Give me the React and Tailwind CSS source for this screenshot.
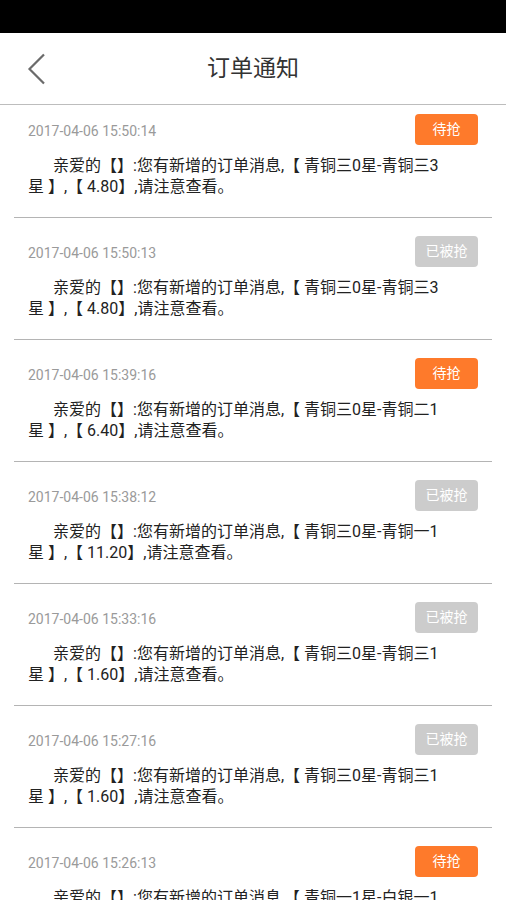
const orders = [
  { time: "2017-04-06 15:50:14", taken: false, range: "青铜三0星-青铜三3", price: "4.80" },
  { time: "2017-04-06 15:50:13", taken: true, range: "青铜三0星-青铜三3", price: "4.80" },
  { time: "2017-04-06 15:39:16", taken: false, range: "青铜三0星-青铜二1", price: "6.40" },
  { time: "2017-04-06 15:38:12", taken: true, range: "青铜三0星-青铜一1", price: "11.20" },
  { time: "2017-04-06 15:33:16", taken: true, range: "青铜三0星-青铜三1", price: "1.60" },
  { time: "2017-04-06 15:27:16", taken: true, range: "青铜三0星-青铜三1", price: "1.60" },
  { time: "2017-04-06 15:26:13", taken: false, range: "青铜一1星-白银一1", price: "2.40" },
];

const OrderItem = ({ order, first }) => {
  return (
    <div className="px-[14px]">
      <div className={`border-b border-[#b4b4b4] px-[14px] pb-[20px] ${first ? "pt-[9px]" : "pt-[18px]"}`}>
        <div className="flex items-center justify-between">
          <span className="text-[14px] text-[#9a9a9a] pt-[3px]">{order.time}</span>
          {order.taken ? (
            <span className="w-[63px] h-[31px] rounded-[4px] bg-[#cccccc] text-white text-[14px] flex items-center justify-center">
              已被抢
            </span>
          ) : (
            <span className="w-[63px] h-[31px] rounded-[4px] bg-[#fe7a2b] text-white text-[14px] flex items-center justify-center">
              待抢
            </span>
          )}
        </div>
        <div className="mt-[10px] text-[16px] leading-[21px] text-[#222]">
          <p className="pl-[25px] whitespace-nowrap">
            亲爱的【】:您有新增的订单消息,【 {order.range}
          </p>
          <p className="whitespace-nowrap">星 】,【 {order.price}】,请注意查看。</p>
        </div>
      </div>
    </div>
  );
};

export default function App() {
  return (
    <div
      className="w-[506px] h-[900px] overflow-hidden bg-white"
      style={{ fontFamily: 'Roboto, "Noto Sans CJK SC", sans-serif' }}
    >
      <div className="h-[33px] bg-black"></div>
      <div className="h-[72px] border-b border-[#bdbdbd] grid grid-cols-[1fr_auto_1fr] items-center">
        <div className="pl-[27px] flex items-center">
          <svg width="19" height="32" viewBox="0 0 19 32" fill="none">
            <polyline points="17,1.5 2.5,16 17,30.5" stroke="#6b6b6b" strokeWidth="2.2" />
          </svg>
        </div>
        <h1 className="text-[23px] text-[#333] pt-[2px]">订单通知</h1>
        <div></div>
      </div>
      <div>
        {orders.map((o, i) => (
          <OrderItem key={i} order={o} first={i === 0} />
        ))}
      </div>
    </div>
  );
}
